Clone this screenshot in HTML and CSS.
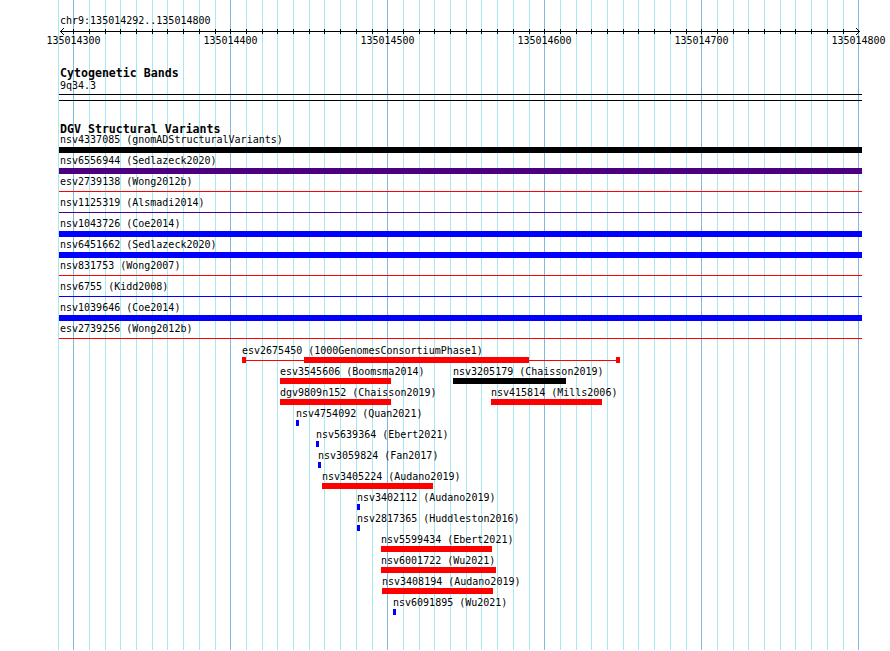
FILE: index.html
```
<html>
    <head>
        <link rel="stylesheet" href="styles.css">
    </head>
    <body>
        <div class="view">
            <div class="grid" id="grid"></div>
            <div class="ruler">
                <div class="chrom">chr9:135014292..135014800</div>
                <svg class="axis" id="axis" width="890" height="22"></svg>
            </div>
            <div class="track cyto">
                <h2 class="title">Cytogenetic Bands</h2>
                <div class="band-label">9q34.3</div>
                <div class="rule"></div>
                <div class="rule second"></div>
            </div>
            <div class="track dgv">
                <h2 class="title">DGV Structural Variants</h2>
                <div class="vrow"><div class="lbl">nsv4337085 (gnomADStructuralVariants)</div><div class="vbar black"></div></div>
                <div class="vrow"><div class="lbl">nsv6556944 (Sedlazeck2020)</div><div class="vbar purple"></div></div>
                <div class="vrow"><div class="lbl">esv2739138 (Wong2012b)</div><div class="vbar thin red"></div></div>
                <div class="vrow"><div class="lbl">nsv1125319 (Alsmadi2014)</div><div class="vbar thin purple"></div></div>
                <div class="vrow"><div class="lbl">nsv1043726 (Coe2014)</div><div class="vbar blue"></div></div>
                <div class="vrow"><div class="lbl">nsv6451662 (Sedlazeck2020)</div><div class="vbar blue"></div></div>
                <div class="vrow"><div class="lbl">nsv831753 (Wong2007)</div><div class="vbar thin red"></div></div>
                <div class="vrow"><div class="lbl">nsv6755 (Kidd2008)</div><div class="vbar thin blue"></div></div>
                <div class="vrow"><div class="lbl">nsv1039646 (Coe2014)</div><div class="vbar blue"></div></div>
                <div class="vrow"><div class="lbl">esv2739256 (Wong2012b)</div><div class="vbar thin red"></div></div>
            </div>
            <div class="feats" id="feats"></div>
        </div>
        <script>
            function $(id){return document.getElementById(id)};

            // grid + ruler: one line every 10bp, 15.7px apart, first at 135014290
            let svg = $("axis");
            let ns = "http://www.w3.org/2000/svg";
            function el(tag, attrs, cls){
                let e = document.createElementNS(ns, tag);
                for(let k in attrs) e.setAttribute(k, attrs[k]);
                if(cls) e.setAttribute("class", cls);
                svg.appendChild(e);
                return e;
            }
            el("line", {x1: 60, x2: 860, y1: 5.5, y2: 5.5}, "stroke");
            el("polyline", {points: "64,2 60.5,5.5 64,9"}, "stroke");
            el("polyline", {points: "856,2 859.5,5.5 856,9"}, "stroke");
            for(let k = 0; k < 52; k++){
                let x = Math.floor(58 + 15.7*k);
                let major = (k-1) % 10 == 0;
                let g = document.createElement("div");
                g.className = major ? "gl major" : "gl";
                g.style.left = x + "px";
                $("grid").appendChild(g);
                if(k > 0 && k < 51) el("line", {x1: x+0.5, x2: x+0.5, y1: 3, y2: 8}, "stroke");
                if(major){
                    let t = el("text", {x: x+0.5, y: 18, "text-anchor": "middle"}, "tick-label");
                    t.textContent = 135014290 + k*10;
                }
            }

            // features: [x, width, colour, label]
            let rows = [
                [[242, 378, "split", "esv2675450 (1000GenomesConsortiumPhase1)"]],
                [[280, 111, "red", "esv3545606 (Boomsma2014)"], [453, 113, "black", "nsv3205179 (Chaisson2019)"]],
                [[280, 111, "red", "dgv9809n152 (Chaisson2019)"], [491, 111, "red", "nsv415814 (Mills2006)"]],
                [[296, 3, "blue", "nsv4754092 (Quan2021)"]],
                [[316, 3, "blue", "nsv5639364 (Ebert2021)"]],
                [[318, 3, "blue", "nsv3059824 (Fan2017)"]],
                [[322, 111, "red", "nsv3405224 (Audano2019)"]],
                [[357, 3, "blue", "nsv3402112 (Audano2019)"]],
                [[357, 3, "blue", "nsv2817365 (Huddleston2016)"]],
                [[381, 111, "red", "nsv5599434 (Ebert2021)"]],
                [[381, 115, "red", "nsv6001722 (Wu2021)"]],
                [[382, 111, "red", "nsv3408194 (Audano2019)"]],
                [[393, 3, "blue", "nsv6091895 (Wu2021)"]]
            ];
            for(let i = 0; i < rows.length; i++){
                let row = document.createElement("div");
                row.className = "frow";
                let end = 0;
                for(let f of rows[i]){
                    let feat = document.createElement("div");
                    feat.className = "feat";
                    feat.style.marginLeft = (f[0] - end) + "px";
                    feat.style.width = f[1] + "px";
                    let bar = f[2] == "split"
                        ? '<div class="fbar split"><i class="cap"></i><i class="lin" style="width:58px"></i><i class="thick" style="width:225px"></i><i class="lin" style="width:87px"></i><i class="cap"></i></div>'
                        : '<div class="fbar ' + f[2] + '"></div>';
                    feat.innerHTML = '<div class="lbl">' + f[3] + '</div>' + bar;
                    row.appendChild(feat);
                    end = f[0] + f[1];
                }
                $("feats").appendChild(row);
            }
        </script>
    </body>
</html>
```
FILE: styles.css
```
body{
    margin: 0;
    background-color: white;
}
.view{
    position: relative;
    width: 890px;
    height: 651px;
    overflow: hidden;
    font-family: "DejaVu Sans Mono", "Liberation Mono", monospace;
    font-size: 10px;
    color: black;
}

/* background grid */
.grid{
    position: absolute;
    top: 0;
    left: 0;
    right: 0;
    bottom: 1px;
}
.gl{
    position: absolute;
    top: 0;
    bottom: 0;
    width: 1px;
    background-color: #a8e8f0;
}
.gl.major{
    background-color: #80b8e0;
}
.ruler, .track, .feats{
    position: relative;
}

/* ruler */
.chrom{
    padding: 15px 0 0 60px;
    height: 11px;
    line-height: 11px;
}
.axis{
    display: block;
}
.axis .stroke{
    stroke: black;
    stroke-width: 1;
    fill: none;
    shape-rendering: crispEdges;
}
.axis .tick-label{
    font-family: "DejaVu Sans Mono", "Liberation Mono", monospace;
    font-size: 10px;
    fill: black;
}

/* tracks */
.title{
    margin: 0;
    padding-left: 60px;
    height: 10px;
    line-height: 10px;
    font-size: 11.6px;
    font-weight: bold;
    white-space: nowrap;
}
.cyto{
    margin-top: 20px;
}
.band-label{
    margin-top: 2px;
    padding-left: 60px;
    height: 11px;
    line-height: 11px;
}
.rule{
    margin: 3px 0 0 59px;
    width: 803px;
    height: 1px;
    background-color: black;
}
.rule.second{
    margin-top: 5px;
}
.dgv{
    margin-top: 23px;
}
.vrow{
    height: 21px;
}
.vrow .lbl{
    padding-left: 60px;
    height: 13px;
    line-height: 11px;
    white-space: nowrap;
}
.vbar{
    margin-left: 59px;
    width: 803px;
    height: 6px;
}
.vbar.thin{
    height: 1px;
    margin-top: 2px;
}
.black{ background-color: black; }
.purple{ background-color: #4b0082; }
.red{ background-color: red; }
.blue{ background-color: blue; }

/* feature pile */
.feats{
    margin-top: 1px;
}
.frow{
    display: flex;
    height: 21px;
}
.feat{
    flex: none;
}
.feat .lbl{
    height: 12px;
    line-height: 11px;
    white-space: nowrap;
}
.fbar{
    height: 6px;
}
.fbar.split{
    display: flex;
    align-items: flex-start;
}
.split i{
    display: block;
    flex: none;
    background-color: red;
}
.split .cap{
    width: 4px;
    height: 6px;
}
.split .lin{
    height: 1px;
    margin-top: 3px;
}
.split .thick{
    height: 6px;
}
```
